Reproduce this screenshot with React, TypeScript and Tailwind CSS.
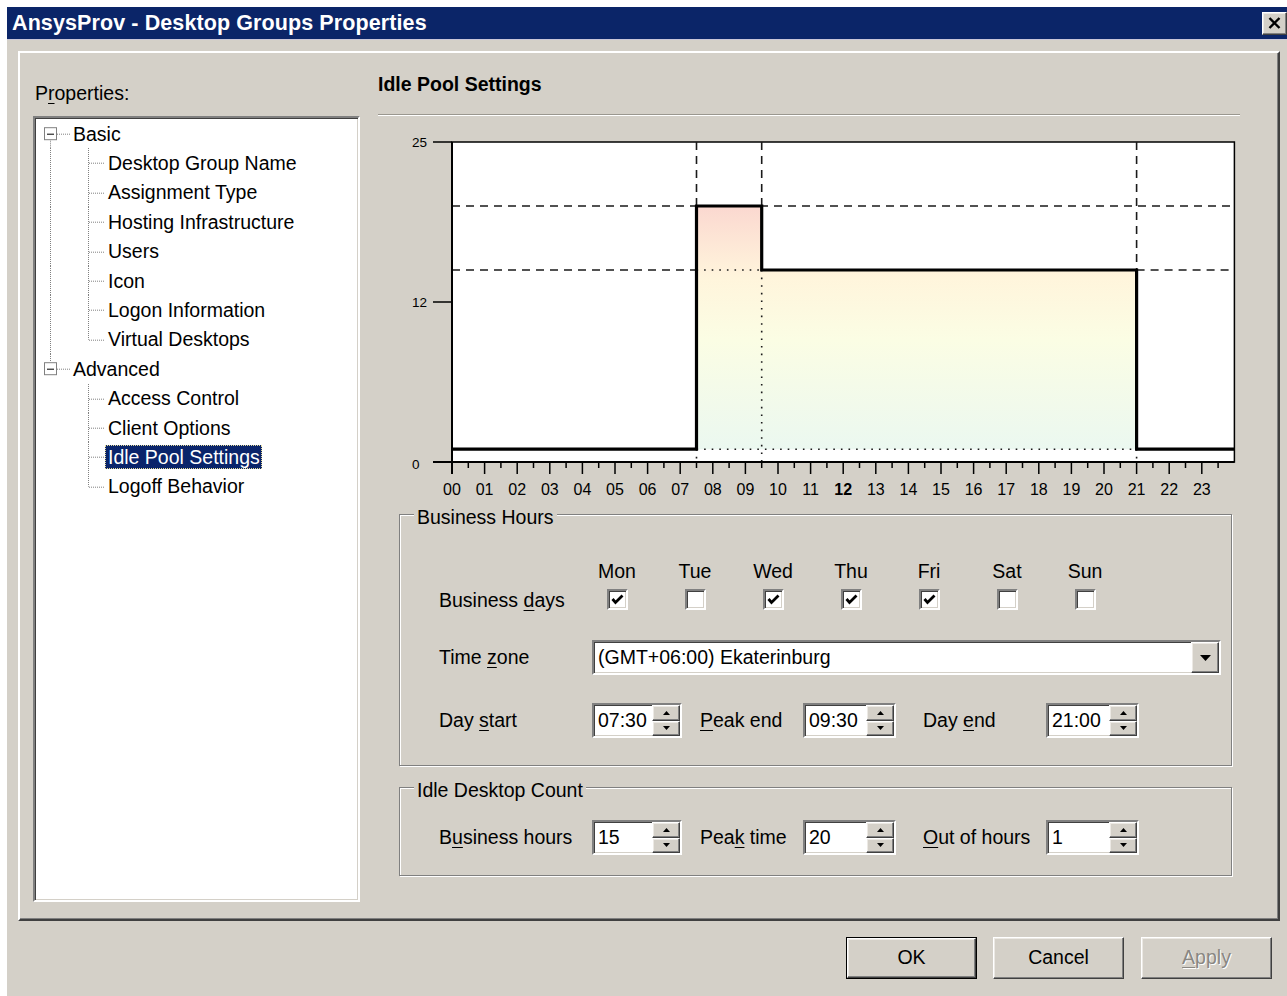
import React from 'react';

const FONT = "font-['Liberation_Sans',Arial,sans-serif]";

// classic 3D edges
const SUNKEN =
  'border-2 border-t-[#808080] border-l-[#808080] border-b-white border-r-white shadow-[inset_1px_1px_0_#404040,inset_-1px_-1px_0_#d4d0c8]';
const RAISED =
  'border border-t-white border-l-white border-b-[#404040] border-r-[#404040] shadow-[inset_-1px_-1px_0_#808080,inset_1px_1px_0_#ece9e4]';

const tree = [
  {
    label: 'Basic',
    children: [
      'Desktop Group Name',
      'Assignment Type',
      'Hosting Infrastructure',
      'Users',
      'Icon',
      'Logon Information',
      'Virtual Desktops',
    ],
  },
  {
    label: 'Advanced',
    children: ['Access Control', 'Client Options', 'Idle Pool Settings', 'Logoff Behavior'],
  },
];

const ROW_H = 29.4;
const CY = ROW_H / 2;
const dot = { stroke: '#808080', strokeWidth: 1, strokeDasharray: '1 1' };

function ParentGutter({ first }: { first: boolean }) {
  return (
    <svg width={35} height={ROW_H} className="shrink-0">
      {first ? (
        <line x1={15.5} y1={CY + 7} x2={15.5} y2={ROW_H} {...dot} />
      ) : (
        <line x1={15.5} y1={0} x2={15.5} y2={CY - 7} {...dot} />
      )}
      <line x1={22} y1={CY + 0.5} x2={35} y2={CY + 0.5} {...dot} />
      <rect x={9.5} y={CY - 6} width={12} height={12} fill="#fff" stroke="#808080" />
      <line x1={12} y1={CY + 0.5} x2={19} y2={CY + 0.5} stroke="#000" strokeWidth={1} />
    </svg>
  );
}

function ChildGutter({ trunk, last }: { trunk: boolean; last: boolean }) {
  return (
    <svg width={70} height={ROW_H} className="shrink-0">
      {trunk && <line x1={15.5} y1={0} x2={15.5} y2={ROW_H} {...dot} />}
      <line x1={53.5} y1={0} x2={53.5} y2={last ? CY : ROW_H} {...dot} />
      <line x1={54} y1={CY + 0.5} x2={70} y2={CY + 0.5} {...dot} />
    </svg>
  );
}

function TreeLabel({ text, selected }: { text: string; selected?: boolean }) {
  return (
    <span
      className={`h-[24px] leading-[24px] pl-[3px] pr-[2px] whitespace-nowrap ${
        selected ? 'bg-[#0a246a] text-white outline outline-1 outline-dotted outline-[#e6dc9a] -outline-offset-1' : ''
      }`}
    >
      {text}
    </span>
  );
}

function PropertyTree() {
  return (
    <div className={`w-[327px] h-[786px] bg-white ${SUNKEN} pt-[1px] text-[19.5px]`}>
      {tree.map((node, ni) => (
        <div key={node.label}>
          <div className="flex items-center h-[29.4px]">
            <ParentGutter first={ni === 0} />
            <TreeLabel text={node.label} />
          </div>
          {node.children.map((c, ci) => (
            <div key={c} className="flex items-center h-[29.4px]">
              <ChildGutter trunk={ni < tree.length - 1} last={ci === node.children.length - 1} />
              <TreeLabel text={c} selected={c === 'Idle Pool Settings'} />
            </div>
          ))}
        </div>
      ))}
    </div>
  );
}

// hour -> x, idle count -> y inside the chart drawing
const X = (h: number) => 74 + h * 32.6;
const Y = (v: number) => 346 - v * 12.8;

function PoolChart() {
  const hours = Array.from({ length: 24 }, (_, i) => i);
  const step: [number, number][] = [
    [0, 1],
    [7.5, 1],
    [7.5, 20],
    [9.5, 20],
    [9.5, 15],
    [21, 15],
    [21, 1],
    [24, 1],
  ];
  const stepPts = step.map(([h, v]) => `${X(h)},${Y(v)}`).join(' ');
  const fillPts = step
    .slice(1, 7)
    .map(([h, v]) => `${X(h)},${Y(v)}`)
    .join(' ');
  const dash = { stroke: '#1a1a1a', strokeWidth: 1.6, strokeDasharray: '8 6' };
  const dots = { stroke: '#1a1a1a', strokeWidth: 1.6, strokeDasharray: '1.6 6' };

  return (
    <svg width={862} height={388} className="block" fontFamily="'Liberation Sans', Arial, sans-serif">
      <defs>
        <linearGradient id="poolFill" gradientUnits="userSpaceOnUse" x1="0" y1={Y(20)} x2="0" y2={Y(1)}>
          <stop offset="0" stopColor="#fbd8d0" />
          <stop offset="0.3" stopColor="#fff5dc" />
          <stop offset="0.55" stopColor="#fbfde4" />
          <stop offset="1" stopColor="#ebf8f0" />
        </linearGradient>
      </defs>

      <rect x={X(0)} y={Y(25)} width={X(24) - X(0)} height={Y(0) - Y(25)} fill="#fff" stroke="#000" strokeWidth={1.5} />
      <polygon points={fillPts} fill="url(#poolFill)" />

      {/* peak / business levels */}
      <line x1={X(0)} y1={Y(20)} x2={X(24)} y2={Y(20)} {...dash} />
      <line x1={X(0)} y1={Y(15)} x2={X(7.5)} y2={Y(15)} {...dash} />
      <line x1={X(21)} y1={Y(15)} x2={X(24)} y2={Y(15)} {...dash} />
      <line x1={X(7.5)} y1={Y(25)} x2={X(7.5)} y2={Y(20)} {...dash} />
      <line x1={X(9.5)} y1={Y(25)} x2={X(9.5)} y2={Y(15)} {...dash} />
      <line x1={X(21)} y1={Y(25)} x2={X(21)} y2={Y(15)} {...dash} />

      <line x1={X(7.5)} y1={Y(15)} x2={X(9.5)} y2={Y(15)} {...dots} />
      <line x1={X(9.5)} y1={Y(15)} x2={X(9.5)} y2={Y(0)} {...dots} />
      <line x1={X(7.5)} y1={Y(1)} x2={X(21)} y2={Y(1)} {...dots} />
      <line x1={X(7.5)} y1={Y(1)} x2={X(7.5)} y2={Y(0)} {...dots} />
      <line x1={X(21)} y1={Y(1)} x2={X(21)} y2={Y(0)} {...dots} />

      <polyline points={stepPts} fill="none" stroke="#000" strokeWidth={3.2} strokeLinejoin="miter" />

      {/* axes */}
      <line x1={X(0)} y1={Y(25)} x2={X(0)} y2={Y(0) + 12} stroke="#000" strokeWidth={2} />
      <line x1={55} y1={Y(0)} x2={X(24)} y2={Y(0)} stroke="#000" strokeWidth={2} />
      <line x1={55} y1={Y(25)} x2={X(0)} y2={Y(25)} stroke="#000" strokeWidth={1.5} />
      <line x1={55} y1={Y(12.5)} x2={X(0)} y2={Y(12.5)} stroke="#000" strokeWidth={1.5} />
      <text x={34} y={Y(25) + 5} fontSize={13.5}>25</text>
      <text x={34} y={Y(12.5) + 5} fontSize={13.5}>12</text>
      <text x={34} y={Y(0) + 7} fontSize={13.5}>0</text>

      {hours.map((h) => (
        <g key={h}>
          <line x1={X(h)} y1={Y(0)} x2={X(h)} y2={Y(0) + 12} stroke="#000" strokeWidth={1.5} />
          <line x1={X(h + 0.5)} y1={Y(0)} x2={X(h + 0.5)} y2={Y(0) + 6} stroke="#000" strokeWidth={1.5} />
          <text
            x={X(h)}
            y={Y(0) + 33}
            fontSize={16}
            textAnchor="middle"
            fontWeight={h === 12 ? 700 : 400}
          >
            {String(h).padStart(2, '0')}
          </text>
        </g>
      ))}
    </svg>
  );
}

function Key({ children }: { children: React.ReactNode }) {
  return <span className="underline decoration-1 underline-offset-[3px]">{children}</span>;
}

function CheckBox({ checked }: { checked: boolean }) {
  return (
    <div className={`w-[21px] h-[21px] bg-white ${SUNKEN} flex items-center justify-center`}>
      {checked && (
        <svg width={13} height={11} viewBox="0 0 13 11">
          <path d="M1.5 5 L4.5 8.5 L11.5 1.5" fill="none" stroke="#000" strokeWidth={2.8} />
        </svg>
      )}
    </div>
  );
}

function SpinButtons() {
  return (
    <div className="w-[28px] flex flex-col shrink-0">
      <div className={`flex-1 bg-[#d4d0c8] ${RAISED} flex items-center justify-center`}>
        <svg width={7} height={4} viewBox="0 0 7 4">
          <path d="M3.5 0 L7 4 L0 4 Z" fill="#000" />
        </svg>
      </div>
      <div className={`flex-1 bg-[#d4d0c8] ${RAISED} flex items-center justify-center`}>
        <svg width={7} height={4} viewBox="0 0 7 4">
          <path d="M0 0 L7 0 L3.5 4 Z" fill="#000" />
        </svg>
      </div>
    </div>
  );
}

function Spinner({ value, wide }: { value: string; wide?: boolean }) {
  return (
    <div className={`${wide ? 'w-[93px]' : 'w-[90px]'} h-[35px] bg-white ${SUNKEN} flex shrink-0`}>
      <span className="flex-1 pl-[4px] leading-[31px]">{value}</span>
      <SpinButtons />
    </div>
  );
}

function GroupBox({
  title,
  className,
  children,
}: {
  title: string;
  className: string;
  children: React.ReactNode;
}) {
  return (
    <div
      className={`relative ml-[21px] w-[833px] border border-[#808080] shadow-[inset_1px_1px_0_#fff,1px_1px_0_#fff] ${className}`}
    >
      <span className="absolute left-[14px] -top-[10px] px-[3px] bg-[#d4d0c8] leading-[24px]">{title}</span>
      {children}
    </div>
  );
}

const days: [string, boolean][] = [
  ['Mon', true],
  ['Tue', false],
  ['Wed', true],
  ['Thu', true],
  ['Fri', true],
  ['Sat', false],
  ['Sun', false],
];

function BusinessHours() {
  return (
    <GroupBox title="Business Hours" className="mt-[10px] h-[252px]">
      <div className="pl-[39px] pt-[44px]">
        <div className="flex h-[24px] leading-[24px]">
          <div className="w-[139px]" />
          {days.map(([d]) => (
            <div key={d} className="w-[78px] text-center">
              {d}
            </div>
          ))}
        </div>
        <div className="flex items-center mt-[6px] h-[21px]">
          <div className="w-[139px] pt-[2px]">
            Business <Key>d</Key>ays
          </div>
          {days.map(([d, on]) => (
            <div key={d} className="w-[78px] flex justify-center">
              <CheckBox checked={on} />
            </div>
          ))}
        </div>

        <div className="flex items-center mt-[30px]">
          <div className="w-[153px]">
            Time <Key>z</Key>one
          </div>
          <div className={`w-[629px] h-[35px] bg-white ${SUNKEN} flex`}>
            <span className="flex-1 pl-[4px] leading-[31px]">(GMT+06:00) Ekaterinburg</span>
            <div className={`w-[28px] bg-[#d4d0c8] ${RAISED} flex items-center justify-center`}>
              <svg width={11} height={6} viewBox="0 0 11 6">
                <path d="M0 0 L11 0 L5.5 6 Z" fill="#000" />
              </svg>
            </div>
          </div>
        </div>

        <div className="flex items-center mt-[28px]">
          <div className="w-[153px]">
            Day <Key>s</Key>tart
          </div>
          <Spinner value="07:30" />
          <div className="ml-[18px] w-[103px]">
            <Key>P</Key>eak end
          </div>
          <Spinner value="09:30" wide />
          <div className="ml-[27px] w-[123px]">
            Day <Key>e</Key>nd
          </div>
          <Spinner value="21:00" wide />
        </div>
      </div>
    </GroupBox>
  );
}

function IdleCount() {
  return (
    <GroupBox title="Idle Desktop Count" className="mt-[21px] h-[89px]">
      <div className="pl-[39px] pt-[32px] flex items-center">
        <div className="w-[153px]">
          B<Key>u</Key>siness hours
        </div>
        <Spinner value="15" />
        <div className="ml-[18px] w-[103px]">
          Pea<Key>k</Key> time
        </div>
        <Spinner value="20" wide />
        <div className="ml-[27px] w-[123px]">
          <Key>O</Key>ut of hours
        </div>
        <Spinner value="1" wide />
      </div>
    </GroupBox>
  );
}

function DialogButton({ label, isDefault, disabled }: { label: React.ReactNode; isDefault?: boolean; disabled?: boolean }) {
  return (
    <div className={`w-[131px] h-[42px] ${isDefault ? 'border border-black' : ''}`}>
      <div
        className={`w-full h-full bg-[#d4d0c8] ${RAISED} flex items-center justify-center ${
          disabled ? 'text-[#8a8782] [text-shadow:1px_1px_0_#fff]' : ''
        }`}
      >
        {label}
      </div>
    </div>
  );
}

export default function App() {
  return (
    <div className={`w-[1287px] h-[996px] bg-white overflow-hidden pl-[7px] pt-[7px] ${FONT} text-black text-[19.5px]`}>
      <div className="w-[1280px] h-[989px] bg-[#d4d0c8] flex flex-col">
        <div className="h-[33px] shrink-0 bg-[#0b2568] flex items-center pl-[5px] border-b border-[#c9c6d8]">
          <span className="text-white font-bold text-[21.5px] tracking-[0.1px]">AnsysProv - Desktop Groups Properties</span>
          <div className={`ml-auto w-[25px] h-[23px] bg-[#d4d0c8] ${RAISED} flex items-center justify-center`}>
            <svg width={13} height={12} viewBox="0 0 13 12">
              <path d="M1.5 1 L11.5 11 M11.5 1 L1.5 11" stroke="#000" strokeWidth={2.4} />
            </svg>
          </div>
        </div>

        <div className="ml-[11px] mt-[11px] w-[1262px] h-[870px] shrink-0 border-2 border-t-white border-l-white border-b-[#404040] border-r-[#404040] shadow-[inset_-1px_-1px_0_#808080] flex">
          <div className="pl-[13px] pt-[28px] flex flex-col">
            <div className="h-[24px] leading-[24px] pl-[2px]">
              P<Key>r</Key>operties:
            </div>
            <div className="mt-[11px]">
              <PropertyTree />
            </div>
          </div>

          <div className="ml-[18px] w-[862px] pt-[19px] flex flex-col">
            <div className="h-[24px] leading-[24px] font-bold">Idle Pool Settings</div>
            <div className="mt-[18px] border-t border-t-[#9a978f] border-b border-b-white" />
            <PoolChart />
            <BusinessHours />
            <IdleCount />
          </div>
        </div>

        <div className="mt-[16px] flex pr-[15px] justify-end">
          <DialogButton label="OK" isDefault />
          <div className="ml-[16px]">
            <DialogButton label="Cancel" />
          </div>
          <div className="ml-[17px]">
            <DialogButton
              disabled
              label={
                <span>
                  <Key>A</Key>pply
                </span>
              }
            />
          </div>
        </div>
      </div>
    </div>
  );
}
